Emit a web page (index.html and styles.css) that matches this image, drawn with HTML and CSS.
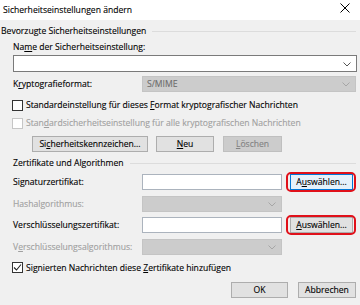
FILE: index.html
```html
<!DOCTYPE html>
<html lang="de">
<head>
<meta charset="utf-8">
<link rel="stylesheet" href="styles.css">
</head>
<body>
<div class="dialog">
  <div class="titlebar">
    <span class="title">Sicherheitseinstellungen ändern</span>
    <svg class="close" width="10" height="10" viewBox="0 0 10 10"><path d="M0.5 0.5L9.5 9.5M9.5 0.5L0.5 9.5" stroke="#000" stroke-width="1" fill="none"/></svg>
  </div>

  <div class="group-head first">
    <span>Bevorzugte Sicherheitseinstellungen</span><span class="rule"></span>
  </div>

  <div class="inner">
    <div class="label name-label">Na<u>m</u>e der Sicherheitseinstellung:</div>
    <div class="combo editable">
      <svg class="chev" width="8" height="5" viewBox="0 0 8 5"><path d="M0.5 0.5L4 4L7.5 0.5" stroke="#555" stroke-width="1" fill="none"/></svg>
    </div>

    <div class="row krypto">
      <span class="label lbl-col">K<u>r</u>yptografieformat:</span>
      <div class="combo disabled">
        <span class="ctext">S/MIME</span>
        <svg class="chev" width="8" height="5" viewBox="0 0 8 5"><path d="M0.5 0.5L4 4L7.5 0.5" stroke="#a6a6a6" stroke-width="1" fill="none"/></svg>
      </div>
    </div>

    <div class="check cb1"><span class="box"></span><span>Standardeinstellung für dieses <u>F</u>ormat kryptografischer Nachrichten</span></div>
    <div class="check cb2 dis"><span class="box"></span><span>Stan<u>d</u>ardsicherheitseinstellung für alle kryptografischen Nachrichten</span></div>

    <div class="btnrow">
      <button class="btn b-kenn">Si<u>c</u>herheitskennzeichen...</button>
      <button class="btn b-neu"><u>N</u>eu</button>
      <button class="btn b-del" disabled><u>L</u>öschen</button>
    </div>
  </div>

  <div class="group-head second">
    <span>Zertifikate und Algorithmen</span><span class="rule"></span>
  </div>

  <div class="inner">
    <div class="cert-grid">
      <span class="label">Signaturzertifikat:</span>
      <div class="field"></div>
      <div class="hl"><button class="btn focus">A<u>u</u>swählen...</button></div>

      <span class="label dis-text">Hashal<u>g</u>orithmus:</span>
      <div class="combo disabled">
        <svg class="chev" width="8" height="5" viewBox="0 0 8 5"><path d="M0.5 0.5L4 4L7.5 0.5" stroke="#a6a6a6" stroke-width="1" fill="none"/></svg>
      </div>
      <span></span>

      <span class="label">Verschlüsselungszertifikat:</span>
      <div class="field"></div>
      <div class="hl"><button class="btn"><u>A</u>uswählen...</button></div>

      <span class="label dis-text">V<u>e</u>rschlüsselungsalgorithmus:</span>
      <div class="combo disabled">
        <svg class="chev" width="8" height="5" viewBox="0 0 8 5"><path d="M0.5 0.5L4 4L7.5 0.5" stroke="#a6a6a6" stroke-width="1" fill="none"/></svg>
      </div>
      <span></span>
    </div>

    <div class="check cb3"><span class="box checked"><svg width="9" height="9" viewBox="0 0 9 9"><path d="M1 4.5L3.5 7L8 1.5" stroke="#222" stroke-width="1.1" fill="none"/></svg></span><span>Signierten Nachrichten diese <u>Z</u>ertifikate hinzufügen</span></div>
  </div>

  <div class="footer">
    <button class="btn b-ok">OK</button>
    <button class="btn b-cancel">Abbrechen</button>
  </div>
</div>
</body>
</html>
```
FILE: styles.css
```css
* { box-sizing: border-box; }
html, body { margin: 0; padding: 0; background: #f0f0f0; }
body { font-family: "Open Sans", "Liberation Sans", sans-serif; font-size: 8.6px; color: #000; -webkit-text-stroke: 0.12px currentColor; }
u { text-decoration: underline; text-underline-offset: 1px; }

.dialog { width: 360px; height: 305px; background: #f0f0f0; overflow: hidden; }

.titlebar { height: 20px; background: #fff; display: flex; align-items: center; justify-content: space-between; padding: 0 10px 1px 3px; }
.title { font-size: 8.6px; line-height: 12px; }
.close { display: block; margin-top: -3px; }

.group-head { display: flex; align-items: center; line-height: 12px; padding-right: 4px; }
.group-head.first { margin-top: 5px; padding-left: 1px; }
.group-head.second { margin-top: 5px; padding-left: 13px; }
.group-head .rule { flex: 1; height: 1px; background: #dcdcdc; margin-left: 6px; margin-top: 1px; }

.inner { padding-left: 13px; padding-right: 3px; }

.label { line-height: 12px; white-space: nowrap; }
.name-label { margin-top: 4px; }

.combo { position: relative; height: 17px; border: 1px solid #7a7a7a; background: #fff; }
.combo.editable { margin-top: 2px; }
.combo.disabled { background: #cccccc; border-color: #c4c4c4; height: 16px; }
.chev { position: absolute; right: 5px; top: 50%; margin-top: -2px; display: block; }
.ctext { position: absolute; left: 4px; top: 1px; line-height: 12px; color: #6d6d6d; }

.row { display: flex; align-items: center; }
.krypto { margin-top: 4px; padding-right: 1px; }
.lbl-col { width: 129px; flex: none; }
.krypto .combo { flex: 1; }

.check { display: flex; align-items: center; line-height: 12px; white-space: nowrap; }
.check .box { width: 11px; height: 11px; border: 1px solid #333; background: #fff; margin-left: -1px; margin-right: 3px; flex: none; display: flex; align-items: center; justify-content: center; }
.check.dis { color: #a0a0a0; }
.check.dis .box { border-color: #c6c6c6; }
.cb1 { margin-top: 7px; }
.cb2 { margin-top: 6px; }
.cb3 { margin-top: 7px; }

.btn { font-family: inherit; font-size: 8.6px; line-height: 12px; height: 16px; padding: 0; margin: 0; background: #e1e1e1; border: 1px solid #adadad; color: #000; white-space: nowrap; }
.btn:disabled { background: #cccccc; border-color: #bfbfbf; color: #838383; }
.btn.focus { border-color: #0078d7; background: #e5f1fb; }

.btnrow { display: flex; margin-top: 7px; padding-left: 19px; }
.b-kenn { width: 116px; }
.b-neu { width: 58px; margin-left: 8px; }
.b-del { width: 59px; margin-left: 9px; }

.cert-grid { display: grid; grid-template-columns: 121px 140px 63px; grid-template-rows: 16px 16px 16px 16px; column-gap: 8px; row-gap: 5.5px; align-items: center; margin-top: 5px; }
.cert-grid .field { height: 16px; border: 1px solid #abb3bd; background: #fff; }
.cert-grid .combo.disabled { height: 16px; }
.dis-text { color: #a0a0a0; }
.hl { position: relative; height: 16px; }
.hl .btn { width: 63px; display: block; }
.hl::after { content: ""; position: absolute; left: -4px; right: -3px; top: -2px; bottom: -2px; border: 2px solid #e0101a; border-radius: 5px; pointer-events: none; }

.footer { display: flex; justify-content: flex-end; margin-top: 8px; padding-right: 4px; gap: 10px; }
.b-ok { width: 57px; }
.b-cancel { width: 58px; }
```
